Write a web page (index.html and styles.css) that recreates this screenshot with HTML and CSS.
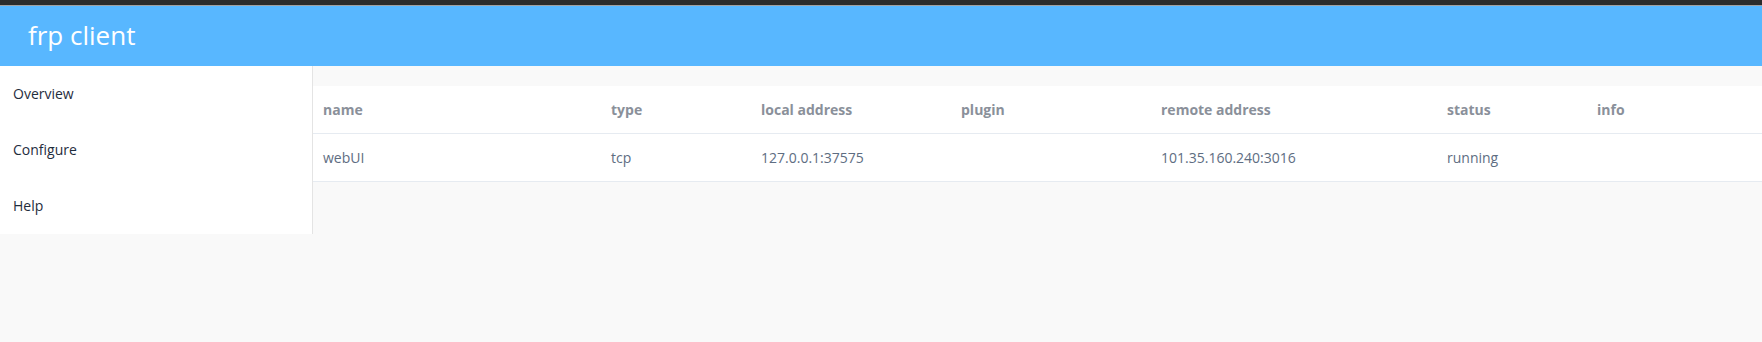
FILE: index.html
```html
<!DOCTYPE html>
<html>
<head>
<meta charset="utf-8">
<link rel="stylesheet" href="styles.css">
</head>
<body>
<div class="chrome"></div>
<header class="topbar"><span class="brand">frp client</span></header>
<div class="layout">
  <nav class="sidebar">
    <div class="menu-item">Overview</div>
    <div class="menu-item">Configure</div>
    <div class="menu-item">Help</div>
  </nav>
  <main class="main">
    <div class="table">
      <div class="row head">
        <div class="cell">name</div>
        <div class="cell">type</div>
        <div class="cell">local address</div>
        <div class="cell">plugin</div>
        <div class="cell">remote address</div>
        <div class="cell">status</div>
        <div class="cell">info</div>
      </div>
      <div class="row">
        <div class="cell">webUI</div>
        <div class="cell">tcp</div>
        <div class="cell">127.0.0.1:37575</div>
        <div class="cell"></div>
        <div class="cell">101.35.160.240:3016</div>
        <div class="cell">running</div>
        <div class="cell"></div>
      </div>
    </div>
  </main>
</div>
</body>
</html>
```
FILE: styles.css
```css
html, body {
  margin: 0;
  padding: 0;
  background: #f9f9f9;
  font-family: "Open Sans", "Noto Sans", sans-serif;
}
.chrome {
  height: 5px;
  background: #2b2b2b;
  border-bottom: 1px solid #a0a0a0;
}
.topbar {
  height: 60px;
  background: #58b7ff;
  display: flex;
  align-items: center;
  padding-left: 28px;
}
.brand {
  color: #fff;
  font-size: 26px;
  line-height: 1;
  position: relative;
  top: -1px;
}
.layout {
  display: flex;
  align-items: flex-start;
}
.sidebar {
  width: 312px;
  background: #fff;
  border-right: 1px solid #e4e4e4;
  flex: none;
}
.menu-item {
  height: 56px;
  line-height: 56px;
  padding-left: 13px;
  font-size: 14px;
  color: #1f2d3d;
}
.main {
  flex: 1;
  padding-top: 20px;
}
.table {
  background: #fff;
}
.row {
  display: grid;
  grid-template-columns: 288px 150px 200px 200px 286px 150px 1fr;
  height: 47px;
  border-bottom: 1px solid #e6ebf1;
  align-items: center;
}
.cell {
  padding-left: 10px;
  font-size: 14px;
  color: #5e6d82;
  white-space: nowrap;
}
.head .cell {
  font-weight: 700;
  color: #8a909a;
}
```
